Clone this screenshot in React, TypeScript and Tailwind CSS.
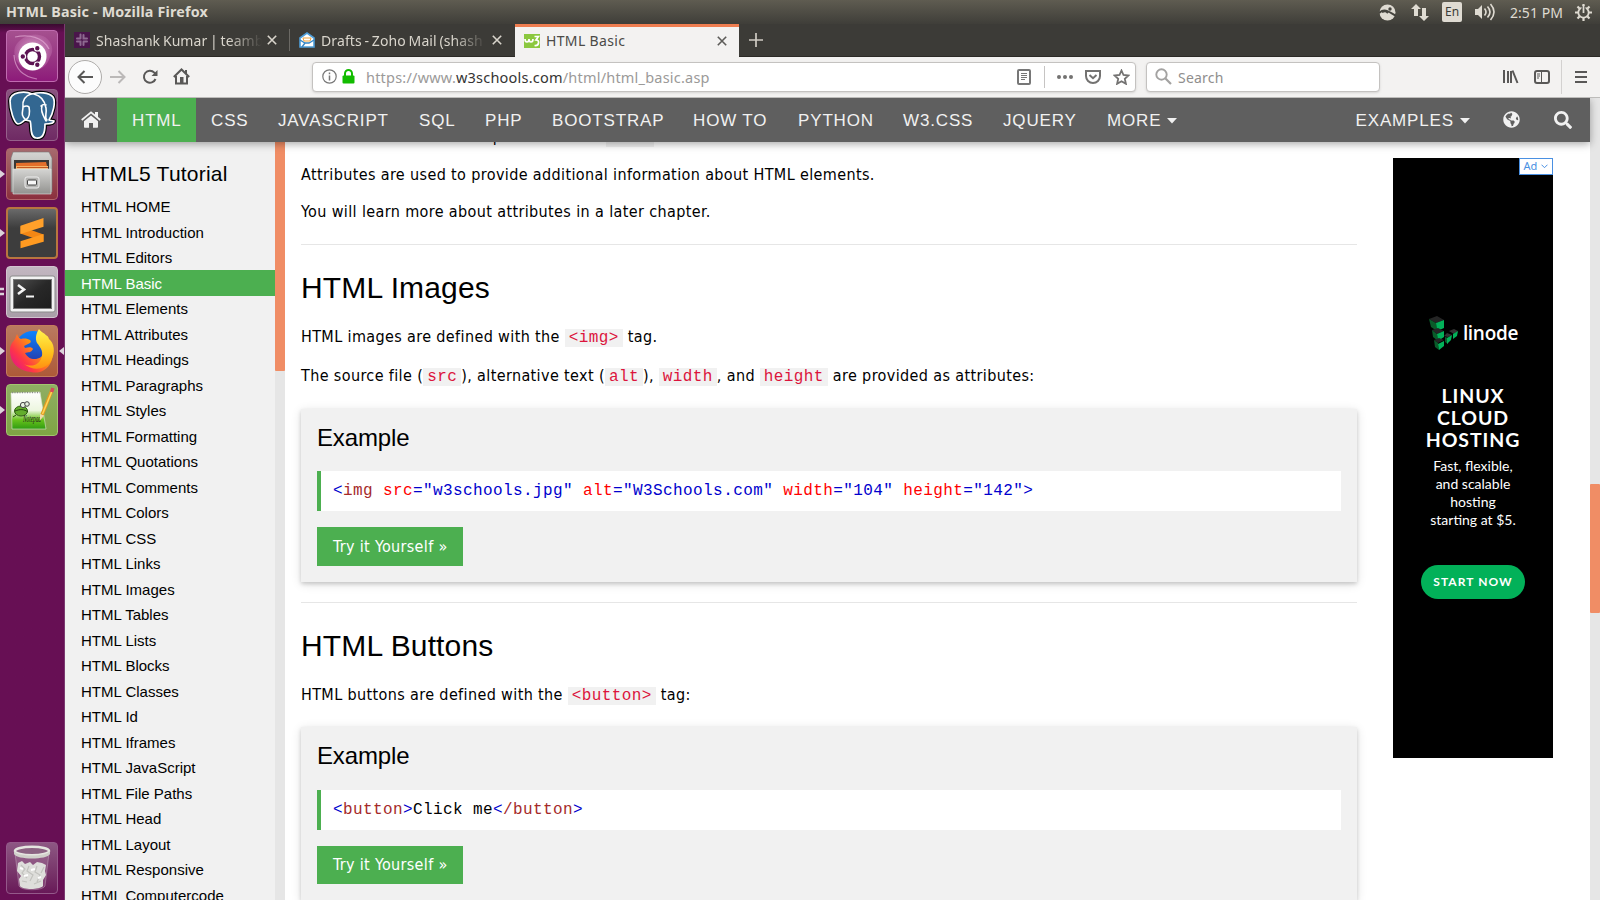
import React from "react";
import { FaSearch, FaGlobeAmericas } from "react-icons/fa";

const UI = "font-['Noto_Sans',sans-serif]";
const ARIAL = "font-['Liberation_Sans',sans-serif]";

function Tile({ className, left, right, double, children }: { className: string; left?: boolean; right?: boolean; double?: boolean; children: React.ReactNode }) {
  return (
    <div className="flex h-[59px] w-[64px] items-start">
      <div className="flex h-[52px] w-[6px] items-center">
        {left && (
          <svg width="6" height="10" viewBox="0 0 6 10"><path d="M0 1 5 5 0 9z" fill="#dcd3da" /></svg>
        )}
        {double && (
          <svg width="6" height="10" viewBox="0 0 6 10"><path d="M0 2h4M0 7h4" stroke="#dcd3da" strokeWidth="2.500" /></svg>
        )}
      </div>
      <div className={`flex h-[52px] w-[52px] items-center justify-center overflow-hidden rounded-[4px] border ${className}`}>{children}</div>
      <div className="flex h-[52px] w-[6px] items-center justify-end">
        {right && (
          <svg width="6" height="10" viewBox="0 0 6 10"><path d="M6 1 1 5 6 9z" fill="#dcd3da" /></svg>
        )}
      </div>
    </div>
  );
}

function UbuntuIcon() {
  return (
    <svg width="50" height="50" viewBox="0 0 50 50">
      <defs>
        <radialGradient id="ub"><stop offset="0" stopColor="#fff" stopOpacity=".75" /><stop offset="1" stopColor="#d78cc6" stopOpacity=".25" /></radialGradient>
      </defs>
      <path d="M43 26c-3 10-11 15-20 13C12 37 5 27 8 16 13 5 28 0 38 6c8 6 9 14 5 20z" fill="url(#ub)" />
      <path d="M8 6c14-3 28 0 34 12M7 24C8 40 18 46 30 48" stroke="#e9b5dc" strokeOpacity=".6" strokeWidth="1.2" fill="none" />
      <circle cx="25.500" cy="25.500" r="14" fill="#fff" />
      <circle cx="25.500" cy="25.500" r="7" fill="none" stroke="#5d1453" strokeWidth="3.400" />
      <g fill="#5d1453" stroke="#fff" strokeWidth="1.200">
        <circle cx="15.800" cy="25.500" r="2.800" /><circle cx="30.300" cy="17.200" r="2.800" /><circle cx="30.300" cy="33.800" r="2.800" />
      </g>
    </svg>
  );
}

const ELEPHANT = "M25 4C19 1 3 1 3 11c0 9 4 22 8 23 3 0 5-3 7-4l5 1c2 3-1 16 6 17 7 1 9-5 9-14 5 0 9-1 9-3-2-1-4 0-5-1 4-6 7-18 4-23-4-5-15-5-21-3z";

function PostgresIcon() {
  return (
    <svg width="50" height="50" viewBox="0 0 50 50">
      <g strokeLinejoin="round" strokeLinecap="round">
        <path d={ELEPHANT} fill="#336791" stroke="#000" strokeWidth="4" />
        <path d={ELEPHANT} fill="#336791" stroke="#fff" strokeWidth="1.700" />
        <path d="M24 4c-6 2-9 6-8 13 0 5-3 8 3 13 4-3 4-8 3-13-2-2-4-1-6 0M27 4c8 2 11 8 12 14 1 6-2 9 1 12M35 16c-2 5 2 11 4 15M34 16c2-2 3-2 5-1" fill="none" stroke="#fff" strokeWidth="1.600" />
      </g>
    </svg>
  );
}

function FilesIcon() {
  return (
    <svg width="50" height="50" viewBox="0 0 50 50">
      <defs><linearGradient id="fi" x1="0" y1="0" x2="0" y2="1"><stop offset="0" stopColor="#d5d5d3" /><stop offset="1" stopColor="#92928f" /></linearGradient></defs>
      <path d="M6 3h36l3 6v34H4V9z" fill="url(#fi)" stroke="#777" strokeWidth=".6" />
      <path d="M7 11h35v10H7z" fill="#3b3835" />
      <path d="M9 14l30-1 2 8H9z" fill="#e5702b" /><path d="M9 17h32v4H9z" fill="#f5b66b" /><path d="M10 18.500h31" stroke="#c5561e" />
      <path d="M6 20h38v25H6z" fill="url(#fi)" stroke="#e6e6e4" strokeWidth=".6" />
      <rect x="18" y="28" width="14" height="11" rx="2" fill="#b5b5b3" stroke="#eee" />
      <rect x="20.500" y="31" width="9" height="5" rx="1" fill="#f7f7f7" stroke="#444" />
    </svg>
  );
}

function SublimeIcon() {
  return (
    <svg width="50" height="50" viewBox="0 0 50 50">
      <path d="M13 25.500 37 34v-7.500L13 18z" fill="#f38715" />
      <path d="M13 33.500 37 26v8L13 41z" fill="#ff9a20" />
      <path d="M13 17.500 37 9.500v9L13 26z" fill="#ffa02a" />
    </svg>
  );
}

function TerminalIcon() {
  return (
    <svg width="50" height="50" viewBox="0 0 50 50">
      <defs><linearGradient id="te" x1="0" y1="0" x2="1" y2="1"><stop offset="0" stopColor="#4e4e4e" /><stop offset=".5" stopColor="#282828" /><stop offset="1" stopColor="#1e1e1e" /></linearGradient></defs>
      <rect x="3" y="9" width="45" height="36" rx="2" fill="#f2f2f2" stroke="#8b8b8b" />
      <rect x="6.500" y="12.500" width="38" height="29" fill="url(#te)" stroke="#777" />
      <path d="M11 18l6 4.500-6 4.500" stroke="#f4f4f4" strokeWidth="2.600" fill="none" /><path d="M19 29.500h8" stroke="#f4f4f4" strokeWidth="2" />
    </svg>
  );
}

function FirefoxIcon() {
  return (
    <svg width="50" height="50" viewBox="0 0 50 50">
      <defs>
        <linearGradient id="f1" x1="1" y1="0" x2="0" y2=".8"><stop offset="0" stopColor="#ffe226" /><stop offset=".4" stopColor="#ff980e" /><stop offset=".75" stopColor="#ff3647" /><stop offset="1" stopColor="#e31587" /></linearGradient>
        <linearGradient id="f2" x1="0" y1="0" x2="0" y2="1"><stop offset="0" stopColor="#0a84ff" /><stop offset="1" stopColor="#2b2f9c" /></linearGradient>
        <linearGradient id="f3" x1="0" y1="0" x2="0" y2="1"><stop offset="0" stopColor="#fff44f" /><stop offset=".6" stopColor="#ffc01c" /><stop offset="1" stopColor="#ff8f12" /></linearGradient>
      </defs>
      <circle cx="26" cy="23" r="18" fill="url(#f2)" />
      <path d="M10 8c1 3 2 4 4 5 4-1 7 0 9 1 1 1 1 2 0 3l-6 3 1 2c4-1 7-1 8 1-2 4-5 3-8 4 3 6 10 8 16 4 5-4 6-9 4-15 7 6 9 13 6 20C40 45 31 48 24 46 11 45 3 36 3 25 3 18 6 16 8 13z" fill="url(#f1)" />
      <path d="M32 3c-3 5-4 9-2 14 4 5 7 9 4 16-3 7-11 8-17 5 10 8 22 5 27-3 5-9 3-18-2-22-1-4-3-3-4-5-3-2-5-3-6-5z" fill="url(#f3)" />
    </svg>
  );
}

function NotepadIcon() {
  return (
    <svg width="50" height="50" viewBox="0 0 50 50">
      <defs><linearGradient id="np" x1="0" y1="0" x2="0" y2="1"><stop offset="0" stopColor="#fff" /><stop offset=".5" stopColor="#ecf6df" /><stop offset=".75" stopColor="#69c21c" /><stop offset="1" stopColor="#2f9c12" /></linearGradient></defs>
      <path d="M4 8l29-1 6 37H5z" fill="url(#np)" stroke="#d9e5cf" strokeWidth=".6" />
      <path d="M5 7.500h28" stroke="#8a8a8a" strokeWidth="1.500" strokeDasharray="1 1.500" />
      <ellipse cx="14" cy="26" rx="6.500" ry="5" fill="#63ad2c" stroke="#2d5c12" /><circle cx="16" cy="20" r="2.600" fill="#e9f2e2" stroke="#444" /><circle cx="20" cy="19" r="2.300" fill="#e9f2e2" stroke="#444" />
      <path d="M8 26c5-2 9-2 13 1M9 30l-3 2" stroke="#24470f" fill="none" />
      <text x="16" y="37" fontSize="10" fontFamily="Liberation Serif" fontStyle="italic" fill="#222" textLength="18" lengthAdjust="spacingAndGlyphs">Notepad</text>
      <path d="M35 30 45 5" stroke="#e09b22" strokeWidth="3.500" /><path d="M35.500 29 45 6" stroke="#ffd55a" strokeWidth="1.500" /><path d="M44.500 7 46 3" stroke="#d44a5a" strokeWidth="3.500" /><path d="M33 29l4 1.500-4 5z" fill="#f1d9a8" />
    </svg>
  );
}

function TrashIcon() {
  return (
    <svg width="50" height="50" viewBox="0 0 50 50">
      <path d="M8 10l4 33c2 5 24 5 26 0l4-33z" fill="#fff" fillOpacity=".12" stroke="#fff" strokeOpacity=".25" />
      <path d="M11 20l4-2 3 3 5-2 3 3 4-3 5 1 4 2-1 6 1 4-3 5v6c-3 4-21 4-23 0l-1-7 2-3-4-5z" fill="#dededb" />
      <path d="M14 22l4 4-3 4 5 5M22 23l-2 5 6 4-3 6M30 23l-2 6 5 3-3 7M37 24l-3 6M15 38l5 1M27 41l7-3" stroke="#c2c2be" fill="none" strokeWidth="1.200" />
      <path d="M13 25l3 1M24 27l4-1M17 33l4-1M31 35l3-1" stroke="#fff" strokeWidth="2" />
      <ellipse cx="25" cy="8" rx="17" ry="4.200" fill="#8c6383" stroke="#e5e5e0" strokeWidth="2.600" />
      <path d="M7 8v3c3 6 33 6 36 0V8c-3 6-33 6-36 0z" fill="#d0d0ca" />
    </svg>
  );
}

function Launcher() {
  return (
    <div className="flex h-[876px] w-[65px] shrink-0 flex-col border-r border-[#7b3a70] bg-[#670f54] bg-linear-to-b from-[#3a0a30] from-0% to-[#670f54] to-1% pt-[6px]">
      <Tile className="border-[#c06bb0] bg-linear-to-b from-[#a5508f] to-[#8d1a7a]"><UbuntuIcon /></Tile>
      <Tile className="border-[#96618b] bg-linear-to-b from-[#8a5480] to-[#6f2a64]"><PostgresIcon /></Tile>
      <Tile left className="border-[#b0646a] bg-linear-to-b from-[#a66a6e] to-[#8b2f3e]"><FilesIcon /></Tile>
      <Tile left className="border-2 border-[#b9763f] bg-linear-to-b from-[#6a6a6a] to-[#3d3d3d] to-40%"><SublimeIcon /></Tile>
      <Tile double className="border-[#d3c4d0] bg-linear-to-b from-[#c2b6c0] to-[#a99ea8]"><TerminalIcon /></Tile>
      <Tile left right className="border-[#c47d5c] bg-linear-to-b from-[#b97a60] to-[#ad5a38]"><FirefoxIcon /></Tile>
      <Tile left className="border-[#a3c56f] bg-linear-to-b from-[#8fae63] to-[#7fa444]"><NotepadIcon /></Tile>
      <div className="mt-auto h-[58px]">
        <Tile className="border-[#94598a] bg-linear-to-b from-[#8d5783] to-[#681958]"><TrashIcon /></Tile>
      </div>
    </div>
  );
}

function TopPanel() {
  return (
    <div className={`flex h-[24px] items-center bg-linear-to-b from-[#5f5c51] to-[#3f3e39] pl-[6px] pr-[8px] text-[#dfdbd2] ${UI}`}>
      <span className="text-[14.300px] font-bold leading-6 tracking-[0.180px]">HTML Basic - Mozilla Firefox</span>
      <div className="ml-auto flex h-6 items-center">
        <svg className="mr-[15px]" width="17" height="17" viewBox="0 0 17 17"><circle cx="8.500" cy="8.500" r="8" fill="#dfdbd2" /><path d="M0 9c5-5 9-2 17 3M3 8c3-1 4-1 6 1" stroke="#45443e" strokeWidth="2" fill="none" /><circle cx="11" cy="5" r="1.700" fill="#45443e" /></svg>
        <svg className="mr-[13px]" width="18" height="17" viewBox="0 0 18 17"><path d="M5 0 0 5h3v7h4V5h3zM13 17l5-5h-3V4h-4v8H8z" fill="#dfdbd2" /></svg>
        <span className="mr-[13px] flex h-5 w-5 items-center justify-center rounded-[2px] bg-[#dfdbd2] text-[12px] text-[#3c3b37]">En</span>
        <svg className="mr-[15px]" width="20" height="18" viewBox="0 0 20 18"><path d="M0 6h3l4-4v14l-4-4H0z" fill="#dfdbd2" /><path d="M9.500 5.500q3 3.500 0 7M12.500 3.500q5 5.500 0 11M15.500 1q7 8 0 16" stroke="#dfdbd2" strokeWidth="1.600" fill="none" /></svg>
        <span className="mr-[12px] w-[53px] whitespace-nowrap text-[14px] tracking-[0.050px]">2:51 PM</span>
        <svg width="17" height="17" viewBox="0 0 17 17"><circle cx="8.500" cy="8.500" r="5.200" fill="none" stroke="#dfdbd2" strokeWidth="1.800" /><path d="M8.500 0v3M8.500 14v3M0 8.500h3M14 8.500h3M2.500 2.500l2 2M12.500 12.500l2 2M14.500 2.500l-2 2M4.500 12.500l-2 2" stroke="#dfdbd2" strokeWidth="2.200" /><path d="M8.500 2v7" stroke="#45443e" strokeWidth="4" /><path d="M8.500 1v8" stroke="#dfdbd2" strokeWidth="1.800" /></svg>
      </div>
    </div>
  );
}

function Close({ color }: { color: string }) {
  return <svg width="10" height="10" viewBox="0 0 10 10"><path d="M.8.8l8.400 8.400M9.200.8.8 9.200" stroke={color} strokeWidth="1.600" /></svg>;
}

function Tabs() {
  return (
    <div className={`flex h-[33px] border-b border-[#2c2a26] bg-[#3c3b37] text-[14px] text-[#d9d5cc] ${UI}`}>
      <div className="flex w-[224px] items-center pl-[9px]">
        <svg width="16" height="16" viewBox="0 0 16 16"><path d="M0 0h16v16H0z" fill="#4a154b" /><path d="M6.500 2.500v4M3 6.500h3.500M9.500 3v3.500h3.500M3 9.500h3.500V13M9.500 9.500V13M9.500 9.500H13" stroke="#8d6a90" strokeWidth="2" strokeLinecap="round" fill="none" /></svg>
        <span className="ml-[6px] w-[166px] whitespace-nowrap tracking-[0.080px] mask-r-from-80% [word-spacing:-1px]">Shashank Kumar | teamb</span>
        <span className="ml-[5px]"><Close color="#d9d5cc" /></span>
      </div>
      <div className="my-[5px] w-px bg-[#6b6964]" />
      <div className="flex w-[225px] items-center pl-[9px]">
        <svg width="16" height="16" viewBox="0 0 16 16"><path d="M1 6 8 1l7 5v9H1z" fill="#fff" stroke="#4f9ed8" strokeWidth="1.600" /><path d="M1 8l5 3h4l5-3M3 15l3-4" stroke="#3787c5" strokeWidth="1.400" fill="none" /><path d="M4 6h8l-1 3H5z" fill="#fff" stroke="#f0a13a" /></svg>
        <span className="ml-[6px] w-[165px] whitespace-nowrap tracking-[0.100px] mask-r-from-80% [word-spacing:-1px]">Drafts - Zoho Mail (shash</span>
        <span className="ml-[6px]"><Close color="#d9d5cc" /></span>
      </div>
      <div className="-mb-px flex h-[33px] w-[224px] items-center border-t-[3px] border-[#ee7d50] bg-[#f3f2f1] pb-[3px] pl-[9px] text-[#4b4a47]">
        <svg width="16" height="14" viewBox="0 0 16 14"><path d="M0 0h16v14H0z" fill="#8bc83f" /><path d="M1 5q0 3 2 3t2-3q0 3 2 3t2-3M10.500 2.500h4L12 6q3 0 2.500 3t-4 2.500" stroke="#fff" strokeWidth="1.700" fill="none" /></svg>
        <span className="ml-[6px] w-[171px] whitespace-nowrap tracking-[0.350px]">HTML Basic</span>
        <Close color="#5d5c59" />
      </div>
      <svg className="ml-[10px] mt-[9px]" width="14" height="14" viewBox="0 0 14 14"><path d="M7 0v14M0 7h14" stroke="#d0ccc3" strokeWidth="1.700" /></svg>
    </div>
  );
}

function Toolbar() {
  return (
    <div className={`flex h-[41px] items-center border-b border-[#bdbcba] bg-[#f3f2f1] pb-px ${UI}`}>
      <div className="ml-[3px] flex h-[34px] w-[34px] items-center justify-center rounded-full border border-[#aeacaa] bg-[#fcfcfc]">
        <svg width="16" height="14" viewBox="0 0 16 14"><path d="M16 7H1.500M7.500 1l-6 6 6 6" stroke="#595857" strokeWidth="2" fill="none" /></svg>
      </div>
      <svg className="ml-[8px]" width="16" height="14" viewBox="0 0 16 14"><path d="M0 7h14.500M8.500 1l6 6-6 6" stroke="#bbb9b8" strokeWidth="2" fill="none" /></svg>
      <svg className="ml-[16px]" width="16" height="16" viewBox="0 0 16 16"><path d="M13.500 10A6 6 0 1 1 12.300 3.600L14 5.500" stroke="#595857" strokeWidth="2" fill="none" /><path d="M15.500 1v6h-6z" fill="#595857" /></svg>
      <svg className="ml-[15px]" width="17" height="17" viewBox="0 0 17 17"><path d="M.8 9 8.500 1.500 16.200 9M3 8v7.500h11V8" stroke="#595857" strokeWidth="2" fill="none" /><path d="M7 9h3.500v6.500H7z" fill="#595857" /><path d="M13 2v4" stroke="#595857" strokeWidth="2" /></svg>
      <div className="ml-[122px] flex h-[30px] w-[824px] items-center rounded-[4px] border border-[#c4c2c0] bg-white shadow-sm">
        <svg className="ml-[9px]" width="15" height="15" viewBox="0 0 15 15"><circle cx="7.500" cy="7.500" r="6.700" fill="none" stroke="#777" strokeWidth="1.200" /><path d="M7.500 6.500v5M7.500 3.500v1.700" stroke="#777" strokeWidth="1.500" /></svg>
        <svg className="ml-[5px]" width="13" height="15" viewBox="0 0 13 15"><path d="M3 7V4.500a3.500 3.500 0 0 1 7 0V7" stroke="#12bc00" strokeWidth="2" fill="none" /><rect x=".5" y="6.500" width="12" height="8" rx="1" fill="#12bc00" /></svg>
        <span className="ml-[11px] w-[651px] whitespace-nowrap pt-[2px] text-[14.500px] tracking-[0.210px] text-[#9b9a99]">https://www.<span className="text-[#353433]">w3schools.com</span>/html/html_basic.asp</span>
        <svg width="14" height="16" viewBox="0 0 14 16"><rect x="1" y="1" width="12" height="14" rx="1" fill="none" stroke="#777" strokeWidth="2" /><path d="M4 4.500h6M4 6.500h6M4 8.500h6M4 10.500h4" stroke="#777" /></svg>
        <div className="ml-[13px] h-[22px] w-px bg-[#c6c4c3]" />
        <svg className="ml-[12px]" width="16" height="4" viewBox="0 0 16 4"><g fill="#737271"><circle cx="2" cy="2" r="2" /><circle cx="8" cy="2" r="2" /><circle cx="14" cy="2" r="2" /></g></svg>
        <svg className="ml-[12px]" width="16" height="14" viewBox="0 0 16 14"><path d="M1 1h14v5a7 7 0 0 1-14 0z" stroke="#737271" strokeWidth="2" fill="none" /><path d="M4.500 5 8 8.200 11.500 5" stroke="#737271" strokeWidth="2" fill="none" /></svg>
        <svg className="ml-[12px]" width="17" height="16" viewBox="0 0 17 16"><path d="M8.500 1.500l2 4.500 5 .5-3.700 3.300 1.100 5-4.400-2.600-4.400 2.600 1.100-5L1.500 6.500l5-.5z" stroke="#737271" strokeWidth="1.800" fill="none" /></svg>
      </div>
      <div className="ml-[10px] flex h-[30px] w-[234px] items-center rounded-[4px] border border-[#c4c2c0] bg-white text-[14px] text-[#8f8e8d] shadow-sm">
        <svg className="ml-[8px]" width="17" height="17" viewBox="0 0 17 17"><circle cx="6.500" cy="6.500" r="5.200" fill="none" stroke="#a3a2a1" strokeWidth="1.900" /><path d="M10.500 10.500 16 16" stroke="#a3a2a1" strokeWidth="2.200" /></svg>
        <span className="ml-[6px] pt-[2px] tracking-[0.200px]">Search</span>
      </div>
      <svg className="ml-[122px]" width="17" height="15" viewBox="0 0 17 15"><path d="M2 1v13M6 2v12M9 2v12M10.500 1.500l5 12.500" stroke="#595857" strokeWidth="2" fill="none" /></svg>
      <svg className="ml-[15px]" width="16" height="14" viewBox="0 0 16 14"><rect x="1" y="1" width="14" height="12" rx="2" fill="none" stroke="#595857" strokeWidth="2" /><path d="M7.500 1v12M3 4h3M3 6h3M3 8h2" stroke="#595857" /></svg>
      <div className="ml-[11px] h-[34px] w-px bg-[#d3d1d0]" />
      <svg className="ml-[13px]" width="12" height="12" viewBox="0 0 12 12"><path d="M0 1h12M0 6h12M0 11h12" stroke="#595857" strokeWidth="1.800" /></svg>
    </div>
  );
}

const NAV: [string, string][] = [
  ["HTML", "w-[79px] bg-[#4caf50]"],
  ["CSS", "w-[67px]"],
  ["JAVASCRIPT", "w-[141px]"],
  ["SQL", "w-[66px]"],
  ["PHP", "w-[67px]"],
  ["BOOTSTRAP", "w-[141px]"],
  ["HOW TO", "w-[105px]"],
  ["PYTHON", "w-[105px]"],
  ["W3.CSS", "w-[100px]"],
  ["JQUERY", "w-[104px]"],
];

function Caret() {
  return <svg className="ml-[6px]" width="10" height="6" viewBox="0 0 10 6"><path d="M0 0h10L5 5.500z" fill="#f1f1f1" /></svg>;
}

function SiteNav() {
  return (
    <div className={`relative z-10 flex h-[44px] w-[1525px] items-center bg-[#5f5f5f] text-[17px] tracking-[0.850px] text-[#f1f1f1] shadow-[0_2px_8px_rgba(0,0,0,0.35)] ${ARIAL}`}>
      <div className="flex w-[52px] justify-center pb-px">
        <svg width="20" height="17" viewBox="0 0 20 17"><path d="M10 4.500 3 10.300V16q0 .8.800.8H8V12h4v4.800h4.200q.8 0 .8-.8v-5.700z" fill="#f1f1f1" /><path d="M.7 9 10 1.300 19.300 9" stroke="#f1f1f1" strokeWidth="1.700" fill="none" /><path d="M14 1h3v6l-3-2.500z" fill="#f1f1f1" /></svg>
      </div>
      {NAV.map(([t, c]) => (
        <div key={t} className={`flex h-[44px] items-center whitespace-nowrap pl-[15px] pt-[2px] ${c}`}>{t}</div>
      ))}
      <div className="flex items-center pl-[15px] pt-[2px]">MORE<Caret /></div>
      <div className="ml-auto flex items-center pt-[2px]">EXAMPLES<Caret /></div>
      <FaGlobeAmericas className="mb-[2px] ml-[33px]" size={17} />
      <FaSearch className="mb-px ml-[34px] mr-[18px]" size={18} />
    </div>
  );
}

const ITEMS = ["HTML HOME", "HTML Introduction", "HTML Editors", "HTML Basic", "HTML Elements", "HTML Attributes", "HTML Headings", "HTML Paragraphs", "HTML Styles", "HTML Formatting", "HTML Quotations", "HTML Comments", "HTML Colors", "HTML CSS", "HTML Links", "HTML Images", "HTML Tables", "HTML Lists", "HTML Blocks", "HTML Classes", "HTML Id", "HTML Iframes", "HTML JavaScript", "HTML File Paths", "HTML Head", "HTML Layout", "HTML Responsive", "HTML Computercode"];

function Sidebar() {
  return (
    <div className={`flex h-[758px] w-[220px] shrink-0 overflow-hidden bg-[#f1f1f1] ${ARIAL}`}>
      <div className="w-[210px]">
        <h2 className="flex h-[51.500px] items-center pl-[16px] pt-[12px] text-[21px] tracking-[0.220px]">HTML5 Tutorial</h2>
        {ITEMS.map((t, i) => (
          <div key={t} className={`flex h-[25.500px] items-center pl-[16px] pt-[2px] text-[15px] ${i === 3 ? "bg-[#4caf50] text-white" : "text-black"}`}>{t}</div>
        ))}
      </div>
      <div className="w-[10px] bg-[#e6e6e6]"><div className="h-[229px] rounded-b-[1px] bg-[#f08d65]" /></div>
    </div>
  );
}

function Code({ children }: { children: React.ReactNode }) {
  return <code className="bg-[#f1f1f1] px-[4px] font-['Liberation_Mono',monospace] text-[16px] leading-[18px] tracking-[0.400px] text-[#dc143c]">{children}</code>;
}

function P({ className, children }: { className: string; children: React.ReactNode }) {
  return <p className={`whitespace-nowrap leading-[22px] tracking-[0.375px] ${className}`}>{children}</p>;
}

function H2({ children }: { children: React.ReactNode }) {
  return <h2 className={`mt-[20px] h-[46px] text-[30px] leading-[45px] tracking-[0.150px] ${ARIAL}`}>{children}</h2>;
}

function Example({ codeGap, buttonHeight, children }: { codeGap: string; buttonHeight: string; children: React.ReactNode }) {
  return (
    <div className="h-[173px] bg-[#f1f1f1] px-[16px] pt-[11px] shadow-[0_2px_4px_rgba(0,0,0,0.16),0_2px_10px_rgba(0,0,0,0.12)]">
      <h3 className={`h-[36px] text-[24px] leading-[36px] tracking-[-0.150px] ${ARIAL}`}>Example</h3>
      <div className={`h-[40px] whitespace-nowrap border-l-[4px] border-[#4caf50] bg-white pl-[12px] font-['Liberation_Mono',monospace] text-[16px] leading-[40px] tracking-[0.400px] text-[#0000cd] ${codeGap}`}>{children}</div>
      <div className={`mt-[16px] flex w-[146px] items-center whitespace-nowrap bg-[#4caf50] pl-[16px] text-[16px] tracking-[0.330px] text-white ${buttonHeight}`}>Try it Yourself »</div>
    </div>
  );
}

const Tag = ({ children }: { children: React.ReactNode }) => <span className="text-[#a52a2a]">{children}</span>;
const Attr = ({ children }: { children: React.ReactNode }) => <span className="text-[red]">{children}</span>;

function Article() {
  return (
    <div className="ml-[16px] h-[758px] w-[1056px] shrink-0 font-['DejaVu_Sans_Condensed','DejaVu_Sans',sans-serif] text-[16px] text-black [font-stretch:condensed]">
      <P className="-mt-[16px]">The link's destination is specified in the <Code>href</Code> attribute.</P>
      <P className="mt-[16px]">Attributes are used to provide additional information about HTML elements.</P>
      <P className="mt-[15px]">You will learn more about attributes in a later chapter.</P>
      <div className="mt-[21px] h-px bg-[#e6e6e6]" />
      <H2>HTML Images</H2>
      <P className="mt-[15px]">HTML images are defined with the <Code>&lt;img&gt;</Code> tag.</P>
      <P className="mt-[17px]">The source file (<Code>src</Code>), alternative text (<Code>alt</Code>), <Code>width</Code>, and <Code>height</Code> are provided as attributes:</P>
      <div className="h-[22px]" />
      <Example codeGap="mt-[15px]" buttonHeight="h-[39px]">&lt;<Tag>img</Tag> <Attr>src</Attr>="w3schools.jpg" <Attr>alt</Attr>="W3Schools.com" <Attr>width</Attr>="104" <Attr>height</Attr>="142"&gt;</Example>
      <div className="mt-[20px] h-px bg-[#e6e6e6]" />
      <H2>HTML Buttons</H2>
      <P className="mt-[15px]">HTML buttons are defined with the <Code>&lt;button&gt;</Code> tag:</P>
      <div className="h-[21px]" />
      <Example codeGap="mt-[16px]" buttonHeight="h-[38px]">&lt;<Tag>button</Tag>&gt;<span className="text-black">Click me</span>&lt;<Tag>/button</Tag>&gt;</Example>
    </div>
  );
}

function Ad() {
  return (
    <div className="ml-[36px] mt-[16px] flex h-[600px] w-[160px] shrink-0 flex-col items-center bg-black font-['Lato',sans-serif] text-white">
      <div className="flex h-[17px] w-[34px] items-center justify-center gap-[4px] self-end border border-[#4a90e2] bg-white text-[11px] text-[#4a90e2]">
        <span className="font-['Noto_Sans',sans-serif]">Ad</span>
        <svg width="7" height="5" viewBox="0 0 7 5"><path d="M.5.7l3 3 3-3" stroke="#4a90e2" fill="none" /></svg>
      </div>
      <div className="mt-[140px] flex h-[36px] items-center">
        <svg width="30" height="36" viewBox="0 0 30 36">
          <path d="M1 4 9 1l7 4-8 3z" fill="#252525" /><path d="M1 4l7 4 1 8-6-4z" fill="#0a5c2a" /><path d="M8 8l8-3v8l-7 3z" fill="#02b159" />
          <path d="M4 15l5 4 7-3-6-3z" fill="#252525" /><path d="M4 15l5 4 1 7-5-4z" fill="#0a5c2a" /><path d="M9 19l7-3v6l-6 4z" fill="#02b159" />
          <path d="M6 25l4 3 6-3-5-2z" fill="#252525" /><path d="M6 25l4 3 1 7-4-3z" fill="#0a5c2a" /><path d="M10 29l6-3v5l-5 4z" fill="#02b159" />
          <path d="M16 21l3-3 5 2-4 2z" fill="#333" /><path d="M17 22l3 1v6l-3-2z" fill="#0a5c2a" /><path d="M19 23l5-3-1 5-4 4z" fill="#02b159" />
          <path d="M21 16l5-2 4 2-4 3z" fill="#333" /><path d="M25 19l5-3-1 5-4 3z" fill="#02b159" />
        </svg>
        <span className="ml-[5px] pt-px font-['Open_Sans',sans-serif] text-[19px] font-semibold tracking-[-0.300px]">linode</span>
      </div>
      <div className="mt-[34px] w-full text-center text-[19.500px] font-bold leading-[22px] tracking-[0.900px]">LINUX<br />CLOUD<br />HOSTING</div>
      <div className="mt-[6px] w-full text-center text-[14px] leading-[18px]">Fast, flexible,<br />and scalable<br />hosting<br />starting at $5.</div>
      <div className="mt-[36px] flex h-[34px] w-[104px] items-center justify-center whitespace-nowrap rounded-full bg-[#02b159] text-[12px] font-bold tracking-[1.050px]">START NOW</div>
    </div>
  );
}

export default function App() {
  return (
    <div className="h-[900px] w-[1600px] overflow-hidden bg-white">
      <TopPanel />
      <div className="flex">
        <Launcher />
        <div className="flex h-[876px] w-[1535px] flex-col">
          <Tabs />
          <Toolbar />
          <div className="flex h-[802px] overflow-hidden">
            <div className="w-[1525px]">
              <SiteNav />
              <div className="flex h-[758px] overflow-hidden">
                <Sidebar />
                <Article />
                <Ad />
              </div>
            </div>
            <div className="w-[10px] bg-[#e6e6e6] pt-[386px]"><div className="h-[129px] rounded-[1px] bg-[#f08d65]" /></div>
          </div>
        </div>
      </div>
    </div>
  );
}
